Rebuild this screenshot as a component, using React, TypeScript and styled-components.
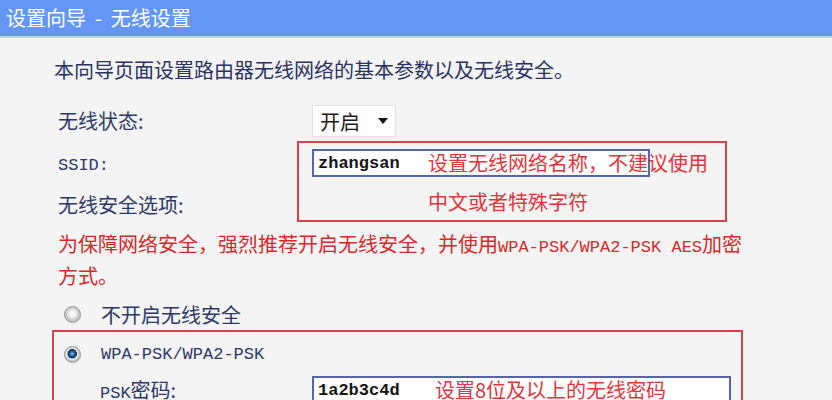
import styled, { createGlobalStyle } from "styled-components";

const GlobalStyle = createGlobalStyle`
  html, body {
    margin: 0;
    padding: 0;
  }
  body {
    background: #f4f4f4;
    font-family: "Noto Sans CJK SC", "Noto Sans", sans-serif;
  }
`;

const Page = styled.div`
  width: 832px;
  height: 400px;
  overflow: hidden;
  background: #f4f4f4;
`;

const TitleBar = styled.header`
  height: 36px;
  background: #6497f5;
  border-bottom: 2px solid #c2d6f8;
  padding-left: 6px;
  color: #fff;
  font-size: 20px;
  line-height: 36px;
  white-space: pre;
`;

const Content = styled.div`
  padding-left: 54px;
`;

const Intro = styled.p`
  margin: 18px 0 0;
  font-size: 20px;
  line-height: 28px;
  color: #2a3262;
  white-space: nowrap;
`;

// latin text in the old router pages is drawn in a half-width mono face
const Mono = styled.span`
  font-family: "Liberation Mono", monospace;
  font-size: 17px;
`;

const Form = styled.div`
  display: grid;
  grid-template-columns: 254px 1fr;
  grid-template-rows: 36px 42px 44px;
  margin: 21px 0 0 4px;
  color: #2d3868;
  font-size: 20px;
`;

const Label = styled.div<{ $h: number; $row: number }>`
  grid-column: 1;
  grid-row: ${(p) => p.$row};
  line-height: ${(p) => p.$h}px;
  white-space: nowrap;
`;

const Select = styled.div`
  grid-column: 2;
  grid-row: 1;
  width: 84px;
  height: 32px;
  box-sizing: border-box;
  display: flex;
  align-items: center;
  padding-left: 7px;
  background: #fff;
  border: 1px solid #e2e2e2;
  color: #1a1a1a;
  font-size: 20px;
`;

const Arrow = styled.span`
  margin-left: 18px;
  border-left: 5px solid transparent;
  border-right: 5px solid transparent;
  border-top: 6px solid #111;
`;

const MarkBox = styled.div<{ $w: number; $h: number }>`
  position: relative;
  box-sizing: border-box;
  width: ${(p) => p.$w}px;
  height: ${(p) => p.$h}px;
  border: 2px solid #d8434b;
`;

const SsidBox = styled(MarkBox)`
  grid-column: 2;
  grid-row: 2 / span 2;
  align-self: start;
  margin-left: -15px;
  padding: 6px 0 0 13px;
`;

const TextInput = styled.input<{ $w: number }>`
  display: block;
  width: ${(p) => p.$w}px;
  height: 28px;
  box-sizing: border-box;
  margin: 0;
  padding: 0 4px;
  border: 2px solid #5565a5;
  background: #fff;
  color: #151515;
  font-family: "Liberation Mono", monospace;
  font-size: 17px;
  font-weight: bold;
  outline: none;
`;

const Hint = styled.div<{ $left: number; $lh: number }>`
  position: absolute;
  left: ${(p) => p.$left}px;
  top: 0;
  line-height: ${(p) => p.$lh}px;
  font-size: 20px;
  color: #e2363c;
  white-space: nowrap;
  pointer-events: none;
`;

const Warning = styled.p`
  margin: 3px 0 0 4px;
  font-size: 20px;
  line-height: 28px;
  color: #d8282a;
  white-space: nowrap;
`;

const RadioRow = styled.label`
  display: flex;
  align-items: center;
  gap: 20px;
  height: 30px;
  font-size: 20px;
  color: #2d3868;
`;

const FirstRadio = styled(RadioRow)`
  margin-top: 9px;
  padding-left: 10px;
`;

const Radio = styled.span<{ $on?: boolean }>`
  width: 17px;
  height: 17px;
  box-sizing: border-box;
  border-radius: 50%;
  border: 1px solid #979797;
  background: ${(p) =>
    p.$on
      ? "radial-gradient(circle closest-side at 48% 45%, #9ad4f2 0, #2f7ab0 26%, #0e3d66 58%, #0a2c4c 66%, #cfcfcf 72%, #f3f3f3 84%, #c4c4c4 100%)"
      : "radial-gradient(circle closest-side at 50% 45%, #fdfdfd 0, #eeeeee 50%, #c4c4c4 100%)"};
`;

const WpaBox = styled(MarkBox)`
  margin: 1px 0 0 -2px;
  padding: 7px 0 0 10px;
`;

const PskRow = styled.div`
  display: grid;
  grid-template-columns: 212px auto;
  margin-top: 7px;
  padding-left: 36px;
  color: #2d3868;
  font-size: 20px;
`;

const PskLabel = styled.div`
  line-height: 28px;
  white-space: nowrap;
`;

const Field = styled.div`
  position: relative;
`;

export default function App() {
  return (
    <Page>
      <GlobalStyle />
      <TitleBar>设置向导  -  无线设置</TitleBar>
      <Content>
        <Intro>本向导页面设置路由器无线网络的基本参数以及无线安全。</Intro>
        <Form>
          <Label $row={1} $h={32}>
            无线状态:
          </Label>
          <Select>
            开启
            <Arrow />
          </Select>
          <Label $row={2} $h={42}>
            <Mono>SSID:</Mono>
          </Label>
          <SsidBox $w={430} $h={81}>
            <TextInput $w={338} readOnly defaultValue="zhangsan" />
            <Hint $left={129} $lh={39}>
              设置无线网络名称，不建议使用
              <br />
              中文或者特殊字符
            </Hint>
          </SsidBox>
          <Label $row={3} $h={44}>
            无线安全选项:
          </Label>
        </Form>
        <Warning>
          为保障网络安全，强烈推荐开启无线安全，并使用<Mono>WPA-PSK/WPA2-PSK AES</Mono>加密
          <br />
          方式。
        </Warning>
        <FirstRadio>
          <Radio />
          不开启无线安全
        </FirstRadio>
        <WpaBox $w={691} $h={120}>
          <RadioRow>
            <Radio $on />
            <Mono>WPA-PSK/WPA2-PSK</Mono>
          </RadioRow>
          <PskRow>
            <PskLabel>
              <Mono>PSK</Mono>密码:
            </PskLabel>
            <Field>
              <TextInput $w={419} readOnly defaultValue="1a2b3c4d" />
              <Hint $left={123} $lh={28}>
                设置8位及以上的无线密码
              </Hint>
            </Field>
          </PskRow>
        </WpaBox>
      </Content>
    </Page>
  );
}
